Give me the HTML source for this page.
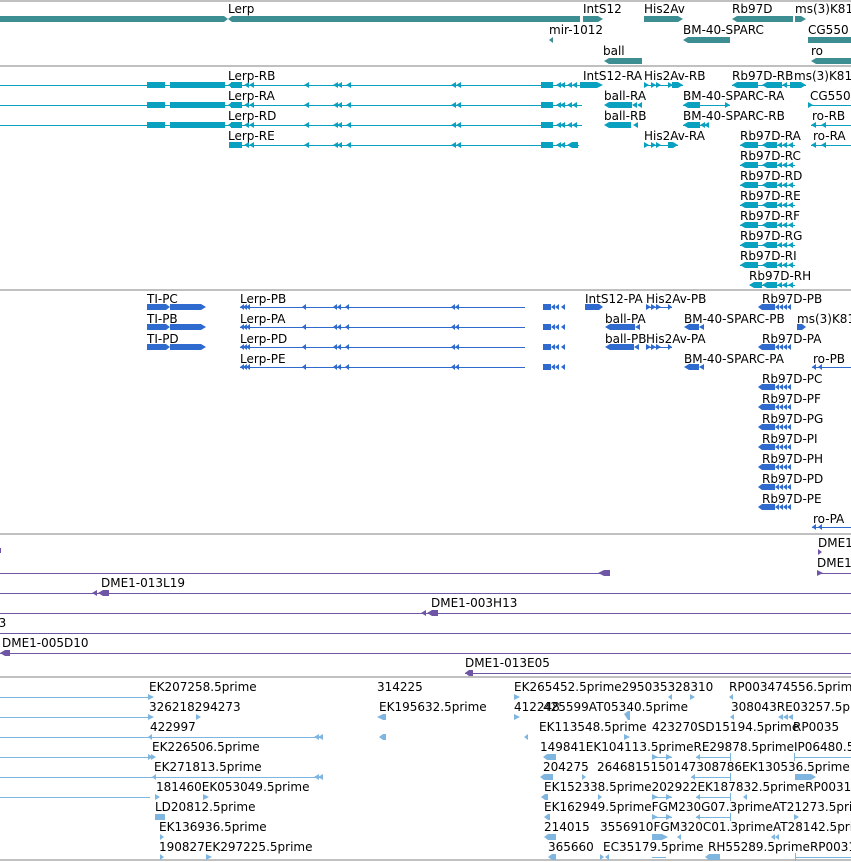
<!DOCTYPE html>
<html><head><meta charset="utf-8"><style>
html,body{margin:0;padding:0;background:#fff;width:851px;height:862px;overflow:hidden}
svg{display:block}
text{font-family:"DejaVu Sans","Liberation Sans",sans-serif;font-size:12px;fill:#000}
</style></head><body>
<svg width="851" height="862" viewBox="0 0 851 862" xmlns="http://www.w3.org/2000/svg">
<g fill="#c0c0c0">
<rect x="0" y="0" width="851" height="2"/>
<rect x="0" y="65" width="851" height="2"/>
<rect x="0" y="289" width="851" height="2"/>
<rect x="0" y="533" width="851" height="2"/>
<rect x="0" y="676" width="851" height="2"/>
<rect x="0" y="859" width="851" height="2"/>
</g>

<g fill="#3d8e92">
<rect x="0" y="16" width="580" height="6"/>
<polygon points="224,16 232,16 228,19" fill="#fff"/><polygon points="224,22 232,22 228,19" fill="#fff"/>
<rect x="583" y="16" width="15" height="6"/><polygon points="598,16 603,19 598,22"/>
<rect x="644" y="16" width="34" height="6"/><polygon points="678,16 683,19 678,22"/>
<polygon points="732,19 737,16 737,22"/><rect x="737" y="16" width="56" height="6"/>
<rect x="795" y="16" width="6" height="6"/><polygon points="801,16 806,19 801,22"/>
<polygon points="549,40 553,37 553,43"/>
<polygon points="683,40 688,37 688,43"/><rect x="688" y="37" width="42" height="6"/>
<rect x="808" y="37" width="43" height="6"/>
<polygon points="604,61 609,58 609,64"/><rect x="609" y="58" width="33" height="6"/>
<polygon points="811,61 816,58 816,64"/><rect x="816" y="58" width="35" height="6"/>
</g>
<g>
<text x="228" y="13">Lerp</text>
<text x="583" y="13">IntS12</text>
<text x="644" y="13">His2Av</text>
<text x="732" y="13">Rb97D</text>
<text x="795" y="13">ms(3)K81</text>
<text x="549" y="34">mir-1012</text>
<text x="683" y="34">BM-40-SPARC</text>
<text x="808" y="34">CG550</text>
<text x="603" y="55">ball</text>
<text x="811" y="55">ro</text>
</g>

<g fill="#0aa0c0">
<rect x="0" y="85" width="600" height="1"/>
<rect x="0" y="105" width="582" height="1"/>
<rect x="0" y="125" width="582" height="1"/>
<rect x="229" y="145" width="350" height="1"/>
<g id="lerpr">
<rect x="147" y="82" width="18" height="6"/><rect x="170" y="82" width="55" height="6"/>
<rect x="231" y="82" width="11" height="6"/><polygon points="228,85 232,82 232,88"/>
<polygon points="244,85 249,82 249,88"/><polygon points="249,85 254,82 254,88"/>
<polygon points="304,85 309,82 309,88"/><polygon points="333,85 338,82 338,88"/><polygon points="337,85 342,82 342,88"/>
<polygon points="346,85 351,82 351,88"/><polygon points="451,85 456,82 456,88"/><polygon points="456,85 461,82 461,88"/>
<rect x="541" y="82" width="12" height="6"/><polygon points="556,85 561,82 561,88"/><polygon points="560,85 565,82 565,88"/>
<polygon points="567,85 572,82 572,88"/><polygon points="572,85 577,82 577,88"/>
</g>
<use href="#lerpr" y="20"/><use href="#lerpr" y="40"/>
<rect x="229" y="142" width="13" height="6"/><polygon points="244,145 249,142 249,148"/><polygon points="249,145 254,142 254,148"/>
<polygon points="304,145 309,142 309,148"/><polygon points="333,145 338,142 338,148"/><polygon points="337,145 342,142 342,148"/><polygon points="346,145 351,142 351,148"/>
<polygon points="451,145 456,142 456,148"/><polygon points="456,145 461,142 461,148"/>
<rect x="541" y="142" width="12" height="6"/><polygon points="556,145 561,142 561,148"/><polygon points="560,145 565,142 565,148"/>
<polygon points="567,145 572,142 572,148"/><rect x="572" y="142" width="6" height="6"/>
<rect x="580" y="82" width="17" height="6"/><polygon points="597,82 603,85 597,88"/>
<rect x="644" y="85" width="39" height="1"/><polygon points="644,82 649,85 644,88"/><polygon points="651,82 656,85 651,88"/><polygon points="656,82 661,85 656,88"/><polygon points="668,82 673,85 668,88"/><rect x="672" y="82" width="6" height="6"/><polygon points="678,82 683,85 678,88"/>
<rect x="732" y="85" width="74" height="1"/><polygon points="732,85 737,82 737,88"/><rect x="737" y="82" width="21" height="6"/>
<polygon points="762,85 767,82 767,88"/><rect x="767" y="82" width="15" height="6"/><polygon points="782,85 787,82 787,88"/><rect x="790" y="82" width="11" height="6"/><polygon points="801,82 806,85 801,88"/>
<polygon points="604,105 609,102 609,108"/><rect x="609" y="102" width="23" height="6"/><polygon points="632,105 637,102 637,108"/><polygon points="637,105 642,102 642,108"/>
<rect x="683" y="105" width="47" height="1"/><polygon points="683,105 688,102 688,108"/><rect x="688" y="102" width="12" height="6"/><polygon points="725,102 730,105 725,108"/>
<rect x="808" y="105" width="43" height="1"/><polygon points="808,102 813,105 808,108"/>
<polygon points="604,125 609,122 609,128"/><rect x="609" y="122" width="22" height="6"/><polygon points="633,125 638,122 638,128"/>
<rect x="683" y="125" width="25" height="1"/><polygon points="683,125 688,122 688,128"/><rect x="688" y="122" width="12" height="6"/><polygon points="700,125 705,122 705,128"/><polygon points="704,125 709,122 709,128"/>
<rect x="811" y="125" width="40" height="1"/><polygon points="811,125 816,122 816,128"/><polygon points="821,125 826,122 826,128"/>
<rect x="644" y="145" width="34" height="1"/><polygon points="644,142 649,145 644,148"/><polygon points="651,142 656,145 651,148"/><polygon points="656,142 661,145 656,148"/><rect x="668" y="142" width="5" height="6"/><polygon points="673,142 678,145 673,148"/>
<rect x="811" y="145" width="40" height="1"/><polygon points="811,145 816,142 816,148"/><polygon points="821,145 826,142 826,148"/>
<g id="rb">
<rect x="740" y="145" width="55" height="1"/><polygon points="740,145 745,142 745,148"/><rect x="745" y="142" width="13" height="6"/>
<polygon points="762,145 767,142 767,148"/><rect x="767" y="142" width="10" height="6"/><polygon points="777,145 782,142 782,148"/><polygon points="782,145 787,142 787,148"/><polygon points="788,145 793,142 793,148"/>
</g>
<use href="#rb" y="20"/><use href="#rb" y="40"/><use href="#rb" y="60"/><use href="#rb" y="80"/><use href="#rb" y="100"/><use href="#rb" y="120"/>
<rect x="750" y="285" width="45" height="1"/><polygon points="749,285 754,282 754,288"/><rect x="754" y="282" width="8" height="6"/><polygon points="762,285 767,282 767,288"/><rect x="767" y="282" width="10" height="6"/><polygon points="777,285 782,282 782,288"/><polygon points="782,285 787,282 787,288"/><polygon points="788,285 793,282 793,288"/>
</g>
<g>
<text x="228" y="80">Lerp-RB</text><text x="228" y="100">Lerp-RA</text><text x="228" y="120">Lerp-RD</text><text x="228" y="140">Lerp-RE</text>
<text x="583" y="80">IntS12-RA</text><text x="644" y="80">His2Av-RB</text><text x="732" y="80">Rb97D-RB</text><text x="794" y="80">ms(3)K81</text>
<text x="604" y="100">ball-RA</text><text x="683" y="100">BM-40-SPARC-RA</text><text x="810" y="100">CG550</text>
<text x="604" y="120">ball-RB</text><text x="683" y="120">BM-40-SPARC-RB</text><text x="812" y="120">ro-RB</text>
<text x="644" y="140">His2Av-RA</text><text x="740" y="140">Rb97D-RA</text><text x="813" y="140">ro-RA</text>
<text x="740" y="160">Rb97D-RC</text><text x="740" y="180">Rb97D-RD</text><text x="740" y="200">Rb97D-RE</text>
<text x="740" y="220">Rb97D-RF</text><text x="740" y="240">Rb97D-RG</text><text x="740" y="260">Rb97D-RI</text>
<text x="749" y="280">Rb97D-RH</text>
</g>

<g fill="#2f6acf">
<g id="ti"><rect x="147" y="304" width="19" height="6"/><polygon points="166,304 170,307 166,310"/><rect x="170" y="304" width="31" height="6"/><polygon points="201,304 206,307 201,310"/></g>
<use href="#ti" y="20"/><use href="#ti" y="40"/>
<g id="lp">
<rect x="240" y="307" width="285" height="1"/><polygon points="240,307 244,304 244,310"/><polygon points="243,307 247,304 247,310"/><polygon points="246,307 250,304 250,310"/>
<polygon points="302,307 306,304 306,310"/><polygon points="333,307 337,304 337,310"/><polygon points="337,307 341,304 341,310"/><polygon points="345,307 349,304 349,310"/>
<polygon points="451,307 455,304 455,310"/><polygon points="455,307 459,304 459,310"/>
<rect x="543" y="304" width="8" height="6"/><polygon points="551,307 555,304 555,310"/><polygon points="555,307 559,304 559,310"/><polygon points="561,307 565,304 565,310"/>
</g>
<use href="#lp" y="20"/><use href="#lp" y="40"/><use href="#lp" y="60"/>
<rect x="585" y="304" width="14" height="6"/><polygon points="599,304 603,307 599,310"/>
<rect x="646" y="307" width="26" height="1"/><polygon points="646,304 651,307 646,310"/><polygon points="651,304 656,307 651,310"/><polygon points="656,304 661,307 656,310"/><polygon points="668,304 672,307 668,310"/>
<g id="rbp"><rect x="762" y="304" width="13" height="6"/><polygon points="758,307 762,304 762,310"/><polygon points="775,307 779,304 779,310"/><polygon points="779,307 783,304 783,310"/><polygon points="783,307 787,304 787,310"/><polygon points="787,307 791,304 791,310"/></g>
<polygon points="605,327 610,324 610,330"/><rect x="610" y="324" width="25" height="6"/><polygon points="635,327 640,324 640,330"/>
<polygon points="684,327 689,324 689,330"/><rect x="689" y="324" width="10" height="6"/><polygon points="699,327 704,324 704,330"/>
<rect x="797" y="324" width="5" height="6"/><polygon points="802,324 806,327 802,330"/>
<polygon points="605,347 610,344 610,350"/><rect x="610" y="344" width="24" height="6"/><polygon points="634,347 639,344 639,350"/>
<rect x="646" y="347" width="26" height="1"/><polygon points="646,344 651,347 646,350"/><polygon points="651,344 656,347 651,350"/><polygon points="656,344 661,347 656,350"/><polygon points="668,344 672,347 668,350"/>
<use href="#rbp" y="40"/>
<polygon points="684,367 689,364 689,370"/><rect x="689" y="364" width="10" height="6"/><polygon points="699,367 704,364 704,370"/>
<rect x="812" y="367" width="39" height="1"/><polygon points="812,367 816,364 816,370"/><polygon points="818,367 822,364 822,370"/>
<use href="#rbp" y="80"/><use href="#rbp" y="100"/><use href="#rbp" y="120"/><use href="#rbp" y="140"/><use href="#rbp" y="160"/><use href="#rbp" y="180"/><use href="#rbp" y="200"/>
<rect x="812" y="527" width="39" height="1"/><polygon points="812,527 816,524 816,530"/><polygon points="818,527 822,524 822,530"/>
</g>
<g>
<text x="147" y="303">TI-PC</text><text x="147" y="323">TI-PB</text><text x="147" y="343">TI-PD</text>
<text x="240" y="303">Lerp-PB</text><text x="240" y="323">Lerp-PA</text><text x="240" y="343">Lerp-PD</text><text x="240" y="363">Lerp-PE</text>
<text x="585" y="303">IntS12-PA</text><text x="646" y="303">His2Av-PB</text><text x="762" y="303">Rb97D-PB</text>
<text x="605" y="323">ball-PA</text><text x="684" y="323">BM-40-SPARC-PB</text><text x="797" y="323">ms(3)K81</text>
<text x="605" y="343">ball-PB</text><text x="646" y="343">His2Av-PA</text><text x="762" y="343">Rb97D-PA</text>
<text x="684" y="363">BM-40-SPARC-PA</text><text x="813" y="363">ro-PB</text>
<text x="762" y="383">Rb97D-PC</text><text x="762" y="403">Rb97D-PF</text><text x="762" y="423">Rb97D-PG</text>
<text x="762" y="443">Rb97D-PI</text><text x="762" y="463">Rb97D-PH</text><text x="762" y="483">Rb97D-PD</text>
<text x="762" y="503">Rb97D-PE</text><text x="813" y="523">ro-PA</text>
</g>

<g fill="#6f55a6">
<rect x="0" y="548" width="1" height="5"/>
<polygon points="818,549 822,552 818,555"/>
<rect x="0" y="573" width="605" height="1"/><polygon points="598,573 604,570 610,570 610,576 604,576"/>
<rect x="817" y="573" width="34" height="1"/><polygon points="817,570 823,573 817,576"/>
<rect x="0" y="593" width="851" height="1"/><polygon points="92,593 97,590 97,596"/><polygon points="98,593 103,590 109,590 109,596 103,596"/>
<rect x="0" y="613" width="851" height="1"/><polygon points="421,613 426,610 426,616"/><polygon points="427,613 432,610 438,610 438,616 432,616"/>
<rect x="0" y="633" width="851" height="1"/>
<rect x="0" y="653" width="851" height="1"/><polygon points="0,653 5,650 10,650 10,656 5,656"/>
<rect x="465" y="673" width="386" height="1"/><polygon points="465,673 469,670 473,670 473,676 469,676"/>
</g>
<g>
<text x="818" y="547">DME1</text><text x="817" y="567">DME1</text>
<text x="101" y="587">DME1-013L19</text><text x="431" y="607">DME1-003H13</text>
<text x="-9" y="627">03</text><text x="2" y="647">DME1-005D10</text><text x="465" y="667">DME1-013E05</text>
</g>

<g fill="#7fb6e0">
<rect x="0" y="697" width="150" height="1"/><polygon points="148,694 154,697 148,700"/>
<rect x="0" y="717" width="150" height="1"/><polygon points="148,714 154,717 148,720"/><polygon points="196,714 201,717 196,720"/>
<rect x="0" y="737" width="198" height="1"/><polygon points="148,737 152,734 152,740"/><polygon points="314,737 319,734 319,740"/><polygon points="318,737 323,734 323,740"/>
<rect x="148" y="737" width="175" height="1"/>
<rect x="0" y="757" width="150" height="1"/><polygon points="148,754 153,757 148,760"/><polygon points="151,754 156,757 151,760"/>
<rect x="0" y="777" width="150" height="1"/><rect x="150" y="777" width="172" height="1"/><polygon points="152,777 156,774 156,780"/><polygon points="314,777 319,774 319,780"/><polygon points="318,777 323,774 323,780"/>
<rect x="0" y="797" width="150" height="1"/><polygon points="155,794 160,797 155,800"/><polygon points="203,794 209,797 203,800"/>
<rect x="155" y="814" width="10" height="6"/>
<polygon points="160,834 164,837 160,840"/>
<polygon points="160,854 164,857 160,860"/><polygon points="206,854 212,857 206,860"/>
<polygon points="377,717 383,714 386,714 386,720 383,720"/><polygon points="379,737 383,734 386,734 386,740 383,740"/>
<polygon points="514,694 520,697 514,700"/><polygon points="514,714 520,717 514,720"/>
<polygon points="624,714 628,711 630,711 630,720 628,720"/><polygon points="668,697 672,694 672,700"/>
<polygon points="690,694 695,697 690,700"/><polygon points="729,697 733,694 733,700"/>
<polygon points="524,737 528,734 528,740"/><polygon points="624,734 630,737 624,740"/>
<polygon points="730,717 734,714 734,720"/><polygon points="778,717 783,714 783,720"/><polygon points="783,717 788,714 788,720"/><polygon points="788,717 793,714 793,720"/>
<polygon points="543,757 547,754 556,754 556,760 547,760"/><rect x="652" y="757" width="20" height="1"/><polygon points="652,754 658,757 652,760"/><polygon points="666,754 672,757 666,760"/>
<rect x="696" y="757" width="35" height="1"/><polygon points="696,757 700,754 700,760"/><rect x="730" y="753" width="1" height="8"/>
<rect x="794" y="757" width="57" height="1"/><rect x="794" y="753" width="1" height="8"/>
<polygon points="540,777 544,774 553,774 553,780 544,780"/><polygon points="582,774 586,777 582,780"/>
<rect x="691" y="777" width="40" height="1"/><polygon points="691,777 695,774 695,780"/><rect x="730" y="773" width="1" height="8"/>
<rect x="795" y="774" width="16" height="6"/><polygon points="811,774 816,777 811,780"/>
<polygon points="541,797 545,794 548,794 548,800 545,800"/><polygon points="598,794 602,797 598,800"/>
<rect x="652" y="797" width="20" height="1"/><polygon points="652,794 658,797 652,800"/><polygon points="666,794 672,797 666,800"/>
<rect x="696" y="797" width="35" height="1"/><polygon points="696,797 700,794 700,800"/><rect x="730" y="793" width="1" height="8"/>
<polygon points="743,797 747,794 747,800"/>
<polygon points="544,817 548,814 550,814 550,820 548,820"/><rect x="652" y="817" width="20" height="1"/><polygon points="652,814 658,817 652,820"/><polygon points="666,814 672,817 666,820"/>
<rect x="696" y="817" width="35" height="1"/><polygon points="696,817 700,814 700,820"/><rect x="730" y="813" width="1" height="8"/><polygon points="794,814 799,817 794,820"/>
<polygon points="544,837 548,834 556,834 556,840 548,840"/><rect x="652" y="834" width="10" height="6"/><polygon points="662,834 668,837 662,840"/><polygon points="677,837 681,834 681,840"/>
<polygon points="600,854 604,857 600,860"/><rect x="652" y="857" width="14" height="1"/>
<polygon points="771,837 775,834 775,840"/><polygon points="775,837 779,834 779,840"/>
<polygon points="548,857 552,854 556,854 556,860 552,860"/><polygon points="605,857 609,854 609,860"/><rect x="709" y="854" width="11" height="6"/><polygon points="705,857 709,854 709,860"/>
<rect x="795" y="857" width="56" height="1"/><rect x="795" y="853" width="1" height="8"/>
</g>
<g>
<text x="149" y="691">EK207258.5prime</text><text x="377" y="691">314225</text><text x="514" y="691">EK265452.5prime295035328310</text><text x="729" y="691">RP003474556.5prime</text>
<text x="149" y="711">326218294273</text><text x="379" y="711">EK195632.5prime</text><text x="514" y="711">412248</text><text x="543" y="711">425599AT05340.5prime</text><text x="731" y="711">308043RE03257.5prime</text>
<text x="150" y="731">422997</text><text x="539" y="731">EK113548.5prime</text><text x="652" y="731">423270SD15194.5prime</text><text x="793" y="731">RP0035</text>
<text x="152" y="751">EK226506.5prime</text><text x="540" y="751">149841EK104113.5primeRE29878.5primeIP06480.5</text>
<text x="154" y="771">EK271813.5prime</text><text x="543" y="771">204275</text><text x="597" y="771">2646815150147308786EK130536.5prime</text>
<text x="156" y="791">181460EK053049.5prime</text><text x="544" y="791">EK152338.5prime202922EK187832.5primeRP0031</text>
<text x="155" y="811">LD20812.5prime</text><text x="544" y="811">EK162949.5primeFGM230G07.3primeAT21273.5prime</text>
<text x="159" y="831">EK136936.5prime</text><text x="544" y="831">214015</text><text x="600" y="831">3556910FGM320C01.3primeAT28142.5prime</text>
<text x="159" y="851">190827EK297225.5prime</text><text x="548" y="851">365660</text><text x="603" y="851">EC35179.5prime</text><text x="708" y="851">RH55289.5primeRP0031</text>
</g>
</svg>
</body></html>
